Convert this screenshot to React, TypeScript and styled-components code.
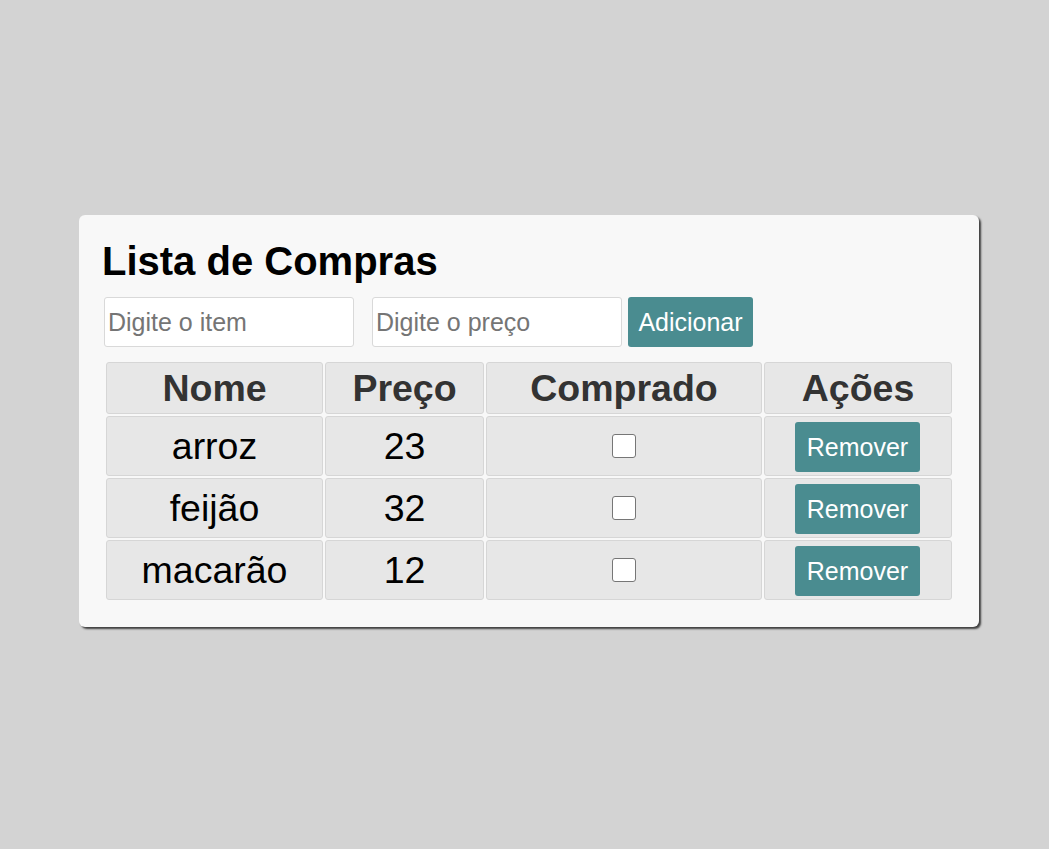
import React from "react";
import styled, { createGlobalStyle } from "styled-components";

const Global = createGlobalStyle`
  *, *::before, *::after { box-sizing: border-box; }
  html, body { margin: 0; padding: 0; background: #d3d3d3; }
  body { font-family: "Liberation Sans", Arial, sans-serif; }
`;

const Page = styled.div`
  min-height: 849px;
  padding: 215px 0 0 79px;
`;

const Card = styled.div`
  width: 900px;
  background: #f8f8f8;
  border-radius: 6px;
  box-shadow: 2px 2px 2px rgba(0, 0, 0, 0.7);
  padding: 23px 25px 25px 25px;
`;

const Title = styled.h1`
  margin: 0 0 13px -2px;
  font-size: 40px;
  font-weight: bold;
  line-height: 46px;
  color: #000;
`;

const Form = styled.div`
  display: flex;
  align-items: center;
  margin-bottom: 13px;
`;

const TextInput = styled.input<{ $gap: number }>`
  width: 250px;
  height: 50px;
  margin-right: ${(p) => p.$gap}px;
  padding: 0 3px;
  border: 1px solid #d9d9d9;
  border-radius: 3px;
  background: #fff;
  font-family: "Liberation Sans", Arial, sans-serif;
  font-size: 25px;
  color: #000;
  outline: none;
  &::placeholder { color: #757575; }
`;

const Button = styled.button`
  width: 125px;
  height: 50px;
  padding: 0;
  border: none;
  border-radius: 3px;
  background: #4a8c90;
  color: #fff;
  font-family: "Liberation Sans", Arial, sans-serif;
  font-size: 25px;
  cursor: pointer;
`;

const RowButton = styled(Button)`
  display: block;
  margin: 2px 0 0 30px;
`;

const Table = styled.table`
  width: 850px;
  table-layout: fixed;
  border-collapse: separate;
  border-spacing: 2px;
`;

const Head = styled.th<{ $w: number }>`
  width: ${(p) => p.$w}px;
  height: 52px;
  padding: 0;
  background: #e7e7e7;
  border: 1px solid #d6d6d6;
  border-radius: 3px;
  font-size: 37.5px;
  font-weight: bold;
  color: #333;
  text-align: center;
  vertical-align: middle;
`;

const Cell = styled.td`
  height: 60px;
  padding: 0;
  background: #e7e7e7;
  border: 1px solid #d6d6d6;
  border-radius: 3px;
  font-size: 37.5px;
  color: #000;
  text-align: center;
  vertical-align: middle;
`;

const Check = styled.input`
  appearance: none;
  -webkit-appearance: none;
  display: block;
  width: 24px;
  height: 24px;
  margin: 0 auto;
  border: 1px solid #767676;
  border-radius: 3px;
  background: #fff;
`;

const items = [
  { name: "arroz", price: 23 },
  { name: "feijão", price: 32 },
  { name: "macarão", price: 12 },
];

export default function App() {
  return (
    <>
      <Global />
      <Page>
        <Card>
          <Title>Lista de Compras</Title>
          <Form>
            <TextInput $gap={18} placeholder="Digite o item" />
            <TextInput $gap={6} placeholder="Digite o preço" />
            <Button>Adicionar</Button>
          </Form>
          <Table>
            <thead>
              <tr>
                <Head $w={217}>Nome</Head>
                <Head $w={159}>Preço</Head>
                <Head $w={276}>Comprado</Head>
                <Head $w={188}>Ações</Head>
              </tr>
            </thead>
            <tbody>
              {items.map((it) => (
                <tr key={it.name}>
                  <Cell>{it.name}</Cell>
                  <Cell>{it.price}</Cell>
                  <Cell>
                    <Check type="checkbox" />
                  </Cell>
                  <Cell>
                    <RowButton>Remover</RowButton>
                  </Cell>
                </tr>
              ))}
            </tbody>
          </Table>
        </Card>
      </Page>
    </>
  );
}
